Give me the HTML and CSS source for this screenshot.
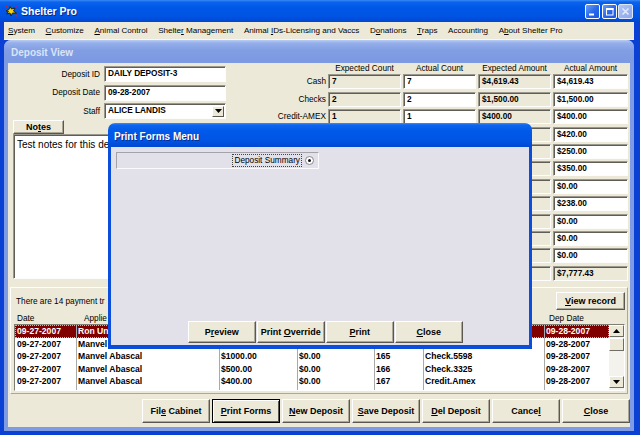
FILE: index.html
```html
<!DOCTYPE html>
<html>
<head>
<meta charset="utf-8">
<title>Shelter Pro</title>
<link rel="stylesheet" href="styles.css">
</head>
<body>
<div class="app">
  <div class="titlebar">
    <svg class="app-icon" viewBox="0 0 13 12" width="13" height="12">
      <path d="M1 6 L4 4.5 L5 1.5 L6.5 4 L10 3 L8.5 6 L11.5 8 L7.5 8 L6 11 L5 8 L1.5 9 L3.5 6.5 Z" fill="#f4d21c" stroke="#1a1a1a" stroke-width="0.9"/>
      <circle cx="1.5" cy="2" r="1" fill="#d0202a"/>
      <circle cx="11.5" cy="10.5" r="1" fill="#d0202a"/>
      <circle cx="11.5" cy="1.5" r="0.9" fill="#7b2bb0"/>
    </svg>
    <span class="app-title">Shelter Pro</span>
    <div class="tb-btns">
      <span class="tb-btn"><svg viewBox="0 0 13 13" width="13" height="13"><rect x="3" y="8.5" width="5" height="2" fill="#fff"/></svg></span>
      <span class="tb-btn"><svg viewBox="0 0 13 13" width="13" height="13"><rect x="3.5" y="3.5" width="6.5" height="6.5" fill="none" stroke="#fff" stroke-width="1"/><rect x="3" y="3" width="7.5" height="2" fill="#fff"/></svg></span>
      <span class="tb-btn close"><svg viewBox="0 0 13 13" width="13" height="13"><path d="M3.5 3.5 L9.5 9.5 M9.5 3.5 L3.5 9.5" stroke="#e3eafb" stroke-width="1.6"/></svg></span>
    </div>
  </div>

  <div class="frame">
    <div class="menubar">
      <span><u>S</u>ystem</span>
      <span><u>C</u>ustomize</span>
      <span><u>A</u>nimal Control</span>
      <span>Shelte<u>r</u> Management</span>
      <span>Animal <u>I</u>Ds-Licensing and Vaccs</span>
      <span>D<u>o</u>nations</span>
      <span><u>T</u>raps</span>
      <span>Accountin<u>g</u></span>
      <span>A<u>b</u>out Shelter Pro</span>
    </div>

    <div class="child">
      <div class="child-title">Deposit View</div>
      <div class="content">
        <div class="top">
          <div class="left">
            <div class="frows">
              <div class="frow"><span class="flabel">Deposit ID</span><div class="inp sunk">DAILY DEPOSIT-3</div></div>
              <div class="frow"><span class="flabel">Deposit Date</span><div class="inp sunk">09-28-2007</div></div>
              <div class="frow"><span class="flabel">Staff</span><div class="inp sunk"><span class="inp-text">ALICE LANDIS</span><span class="dd-btn"><svg viewBox="0 0 7 4" width="7" height="4"><path d="M0 0 H7 L3.5 4 Z" fill="#000"/></svg></span></div></div>
            </div>
            <button class="btn notes-btn"><span>No<u>t</u>es</span></button>
            <div class="notes sunk">Test notes for this deposit.</div>
          </div>

          <div class="grid">
            <span></span>
            <span class="gh">Expected Count</span>
            <span class="gh">Actual Count</span>
            <span class="gh">Expected Amount</span>
            <span class="gh">Actual Amount</span>

            <span class="gl">Cash</span><span class="c ro sunk">7</span><span class="c sunk">7</span><span class="c ro sunk">$4,619.43</span><span class="c sunk">$4,619.43</span>
            <span class="gl">Checks</span><span class="c ro sunk">2</span><span class="c sunk">2</span><span class="c ro sunk">$1,500.00</span><span class="c sunk">$1,500.00</span>
            <span class="gl">Credit-AMEX</span><span class="c ro sunk">1</span><span class="c sunk">1</span><span class="c ro sunk">$400.00</span><span class="c sunk">$400.00</span>
            <span class="gl"></span><span class="c ro sunk"></span><span class="c sunk"></span><span class="c ro sunk"></span><span class="c sunk">$420.00</span>
            <span class="gl"></span><span class="c ro sunk"></span><span class="c sunk"></span><span class="c ro sunk"></span><span class="c sunk">$250.00</span>
            <span class="gl"></span><span class="c ro sunk"></span><span class="c sunk"></span><span class="c ro sunk"></span><span class="c sunk">$350.00</span>
            <span class="gl"></span><span class="c ro sunk"></span><span class="c sunk"></span><span class="c ro sunk"></span><span class="c sunk">$0.00</span>
            <span class="gl"></span><span class="c ro sunk"></span><span class="c sunk"></span><span class="c ro sunk"></span><span class="c sunk">$238.00</span>
            <span class="gl"></span><span class="c ro sunk"></span><span class="c sunk"></span><span class="c ro sunk"></span><span class="c sunk">$0.00</span>
            <span class="gl"></span><span class="c ro sunk"></span><span class="c sunk"></span><span class="c ro sunk"></span><span class="c sunk">$0.00</span>
            <span class="gl"></span><span class="c ro sunk"></span><span class="c sunk"></span><span class="c ro sunk"></span><span class="c sunk">$0.00</span>
            <span class="gl"></span><span></span><span></span><span class="c ro sunk"></span><span class="c ro sunk">$7,777.43</span>
          </div>
        </div>

        <div class="panel">
          <div class="ptop">
            <span class="pinfo">There are 14 payment tr</span>
            <button class="btn view-btn"><span><u>V</u>iew record</span></button>
          </div>
          <div class="lhead">
            <span class="h-date">Date</span>
            <span class="h-app">Applie</span>
            <span></span>
            <span></span>
            <span></span>
            <span></span>
            <span class="h-dep">Dep Date</span>
          </div>
          <div class="list">
            <div class="rows">
              <div class="row sel"><span>09-27-2007</span><span>Ron Un</span><span></span><span></span><span></span><span></span><span>09-28-2007</span></div>
              <div class="row"><span>09-27-2007</span><span>Manvel</span><span></span><span></span><span></span><span></span><span>09-28-2007</span></div>
              <div class="row"><span>09-27-2007</span><span>Manvel Abascal</span><span>$1000.00</span><span>$0.00</span><span>165</span><span>Check.5598</span><span>09-28-2007</span></div>
              <div class="row"><span>09-27-2007</span><span>Manvel Abascal</span><span>$500.00</span><span>$0.00</span><span>166</span><span>Check.3325</span><span>09-28-2007</span></div>
              <div class="row"><span>09-27-2007</span><span>Manvel Abascal</span><span>$400.00</span><span>$0.00</span><span>167</span><span>Credit.Amex</span><span>09-28-2007</span></div>
              <div class="row"><span>09-27-2007</span><span>Manvel Abascal</span><span>$420.00</span><span>$0.00</span><span>168</span><span>Credit.Visa</span><span>09-28-2007</span></div>
            </div>
            <div class="sb">
              <span class="sb-btn"><svg viewBox="0 0 7 4" width="7" height="4"><path d="M0 4 H7 L3.5 0 Z" fill="#000"/></svg></span>
              <span class="sb-thumb"></span>
              <span class="sb-track"></span>
              <span class="sb-btn down"><svg viewBox="0 0 7 4" width="7" height="4"><path d="M0 0 H7 L3.5 4 Z" fill="#000"/></svg></span>
            </div>
          </div>
        </div>

        <div class="actions">
          <button class="btn act"><span>Fil<u>e</u> Cabinet</span></button>
          <button class="btn act default"><span><u>P</u>rint Forms</span></button>
          <button class="btn act"><span><u>N</u>ew Deposit</span></button>
          <button class="btn act"><span><u>S</u>ave Deposit</span></button>
          <button class="btn act"><span><u>D</u>el Deposit</span></button>
          <button class="btn act"><span>Cance<u>l</u></span></button>
          <button class="btn act"><span><u>C</u>lose</span></button>
        </div>
      </div>
    </div>
  </div>

  <div class="dialog">
    <div class="dlg-title">Print Forms Menu</div>
    <div class="dlg-frame">
      <div class="dlg-body">
        <div class="optbox">
          <span class="optlabel">Deposit Summary</span>
          <span class="radio"><span class="dot"></span></span>
        </div>
        <div class="dlg-btns">
          <button class="btn dbtn"><span>P<u>r</u>eview</span></button>
          <button class="btn dbtn"><span>Print <u>O</u>verride</span></button>
          <button class="btn dbtn"><span><u>P</u>rint</span></button>
          <button class="btn dbtn"><span><u>C</u>lose</span></button>
        </div>
      </div>
    </div>
  </div>
</div>
</body>
</html>
```

FILE: styles.css
```css
* { box-sizing: border-box; }
html, body { margin: 0; padding: 0; }
body {
  width: 640px;
  height: 435px;
  overflow: hidden;
  background: #0b40d4;
  font-family: "Liberation Sans", Arial, sans-serif;
  font-size: 8.25px;
  color: #000;
}
.app { position: relative; width: 640px; height: 435px; }

/* ---------- outer title bar ---------- */
.titlebar {
  height: 22px;
  display: flex;
  align-items: center;
  padding: 0 7px 0 5px;
  background: linear-gradient(#3a8cf8 0, #0c63ec 2px, #0058e8 35%, #0053e2 75%, #0047cf 100%);
  color: #fff;
}
.app-icon { width: 13px; height: 12px; margin-right: 3px; }
.app-title {
  flex: 1;
  font-weight: bold;
  font-size: 10.5px;
  text-shadow: 1px 1px 0 #0a2a8c;
}
.tb-btns { display: flex; gap: 1.5px; }
.tb-btn {
  width: 15px;
  height: 15px;
  border: 1px solid #fff;
  border-radius: 2px;
  background: linear-gradient(135deg, #6a9ff9 0, #2866ea 55%, #1c58e0 100%);
  display: flex;
}
.tb-btn.close {
  background: linear-gradient(135deg, #b2c7f4 0, #97b2ee 60%, #8eaaea 100%);
  border-color: #dfe7fb;
}

/* ---------- frame ---------- */
.frame {
  height: 413px;
  display: flex;
  flex-direction: column;
  padding: 0 6px 4px 4px;
}
.menubar {
  height: 18px;
  flex: none;
  display: flex;
  align-items: center;
  gap: 10.6px;
  padding-left: 4px;
  background: #ece9d8;
  font-size: 8.1px;
  border-bottom: 1px solid #f7f6f0;
}

.child {
  flex: 1;
  display: flex;
  flex-direction: column;
  background: #7e9be3;
  padding: 0 4px 4px 4px;
  border-radius: 7px 7px 0 0;
}
.child-title {
  height: 23px;
  flex: none;
  margin: 0 -4px;
  padding: 2px 0 0 7px;
  display: flex;
  align-items: center;
  border-radius: 7px 7px 0 0;
  background: linear-gradient(#b9cdf5 0, #95afea 3px, #819ee4 45%, #7c99e1 100%);
  color: #d9e4f8;
  font-weight: bold;
  font-size: 10px;
}
.content {
  flex: 1;
  display: flex;
  flex-direction: column;
  background: #ece9d8;
  padding-bottom: 3px;
}

/* ---------- sunken & raised ---------- */
.sunk {
  border: 1px solid;
  border-color: #9a988c #fdfdfb #fdfdfb #9a988c;
  box-shadow: inset 1px 1px 0 #5f5d55;
}
.btn {
  font-family: "Liberation Sans", Arial, sans-serif;
  font-weight: bold;
  font-size: 9px;
  color: #000;
  background: #ece9d8;
  border: 1px solid;
  border-color: #fff #5a5850 #5a5850 #fff;
  box-shadow: inset -1px -1px 0 #aca899;
  padding: 0;
  margin: 0;
  display: flex;
  align-items: center;
  justify-content: center;
  white-space: nowrap;
}

/* ---------- top section ---------- */
.top {
  height: 222px;
  flex: none;
  display: flex;
  padding-left: 5px;
}
.left {
  width: 257px;
  margin-right: 2px;
  display: flex;
  flex-direction: column;
  padding-top: 3px;
}
.frows { display: flex; flex-direction: column; gap: 2.5px; }
.frow { display: flex; align-items: center; height: 16px; }
.flabel { width: 91px; text-align: right; padding-right: 4px; }
.inp {
  width: 122px;
  height: 16px;
  background: #fff;
  font-weight: bold;
  line-height: 14px;
  padding-left: 3px;
  display: flex;
  align-items: center;
}
.inp-text { flex: 1; }
.dd-btn {
  width: 12px;
  height: 11px;
  margin-right: 1px;
  background: #ece9d8;
  border: 1px solid;
  border-color: #fff #5a5850 #5a5850 #fff;
  display: flex;
  align-items: center;
  justify-content: center;
}
.notes-btn {
  width: 51px;
  height: 14px;
  margin-top: 0.7px;
}
.notes {
  width: 257px;
  height: 145px;
  background: #fff;
  font-size: 10px;
  padding: 4px 3px;
}

.grid {
  display: grid;
  grid-template-columns: 54px 73px 73px 73px 75px;
  grid-template-rows: 9px;
  grid-auto-rows: 15px;
  row-gap: 2.4px;
  column-gap: 2px;
  align-content: start;
}
.gh { text-align: center; height: 9px; line-height: 12px; white-space: nowrap; }
.gl { text-align: right; line-height: 15px; white-space: nowrap; }
.c {
  height: 15px;
  background: #fff;
  font-weight: bold;
  line-height: 13px;
  padding-left: 3px;
  white-space: nowrap;
  overflow: hidden;
}
.c.ro { background: #ece9d8; }

/* ---------- list panel ---------- */
.panel {
  flex: none;
  height: 107px;
  margin: 2px 2px 0 2px;
  border: 1px solid;
  border-color: #fdfdf9 #aca899 #aca899 #fdfdf9;
  padding: 4px 2px 0 3px;
  display: flex;
  flex-direction: column;
}
.ptop {
  height: 18px;
  display: flex;
  align-items: center;
  justify-content: space-between;
}
.pinfo { padding-left: 2px; }
.view-btn { width: 69px; height: 18px; }
.lhead {
  height: 14px;
  padding: 3px 0 0 1px;
  line-height: 11px;
  display: grid;
  grid-template-columns: 61px 143px 78px 77px 49px 121px 65px;
  white-space: nowrap;
}
.lhead span { padding-left: 2px; }
.lhead .h-app { padding-left: 8px; }
.lhead .h-dep { padding-left: 5px; }
.list {
  height: 67px;
  display: flex;
  background: #fff;
  border: 1px solid;
  border-color: #7f7d72 #fff #fff #7f7d72;
}
.rows { flex: 1; overflow: hidden; }
.row {
  height: 12.5px;
  display: grid;
  grid-template-columns: 61px 143px 78px 77px 49px 121px 65px;
  font-weight: bold;
  font-size: 8.6px;
  line-height: 12.5px;
  white-space: nowrap;
}
.row span { padding-left: 1px; overflow: hidden; border-left: 1px solid #a9a9a9; }
.row span:first-child { padding-left: 2px; border-left: none; }
.row.sel {
  background: #800000;
  color: #fff;
  outline: 1px dotted #d9b0b0;
  outline-offset: -1px;
}
.sb {
  width: 15px;
  display: flex;
  flex-direction: column;
  background: #f3f2ec;
}
.sb-btn, .sb-thumb {
  background: #ece9d8;
  border: 1px solid;
  border-color: #fff #6f6d64 #6f6d64 #fff;
}
.sb-btn {
  height: 12px;
  display: flex;
  align-items: center;
  justify-content: center;
}
.sb-btn.down { margin-bottom: 2px; }
.sb-thumb { height: 13px; margin-top: 1px; }
.sb-track { flex: 1; }

/* ---------- bottom actions ---------- */
.actions {
  display: flex;
  justify-content: flex-end;
  gap: 2px;
  margin-top: 5px;
}
.act { width: 68px; height: 24px; }
.act.default { border-color: #000; box-shadow: inset 1px 1px 0 #fff, inset -1px -1px 0 #5a5850; }

/* ---------- dialog ---------- */
.dialog {
  position: absolute;
  left: 108px;
  top: 123px;
  width: 424px;
  height: 226px;
  display: flex;
  flex-direction: column;
}
.dlg-title {
  height: 24px;
  flex: none;
  border-radius: 7px 7px 0 0;
  background: linear-gradient(#3c8ef8 0, #0d64ed 2px, #0059e9 35%, #0054e3 75%, #0048d2 100%);
  color: #fff;
  font-weight: bold;
  font-size: 10px;
  padding: 3px 0 0 6px;
  display: flex;
  align-items: center;
  text-shadow: 1px 1px 0 #0a2a8c;
}
.dlg-frame {
  flex: 1;
  background: #0a4edb;
  padding: 0 3px 4px 3px;
  display: flex;
}
.dlg-body {
  flex: 1;
  background: #e2e1ea;
  display: flex;
  flex-direction: column;
  padding: 5px 0 2px 5px;
}
.optbox {
  width: 203px;
  height: 17px;
  border: 1px solid;
  border-color: #a3a2aa #fbfbfd #fbfbfd #a3a2aa;
  display: flex;
  align-items: center;
  justify-content: flex-end;
  padding-right: 4px;
}
.optlabel {
  border: 1px dotted #444;
  padding: 0 1px;
  line-height: 11px;
}
.radio {
  width: 9px;
  height: 9px;
  margin-left: 3px;
  border-radius: 50%;
  border: 1px solid #8a8990;
  background: #fff;
  display: flex;
  align-items: center;
  justify-content: center;
}
.dot { width: 3px; height: 3px; border-radius: 50%; background: #111; }
.dlg-btns {
  margin-top: auto;
  display: flex;
  gap: 1.5px;
  padding-left: 72px;
}
.dbtn { width: 67.5px; height: 22px; }
```
